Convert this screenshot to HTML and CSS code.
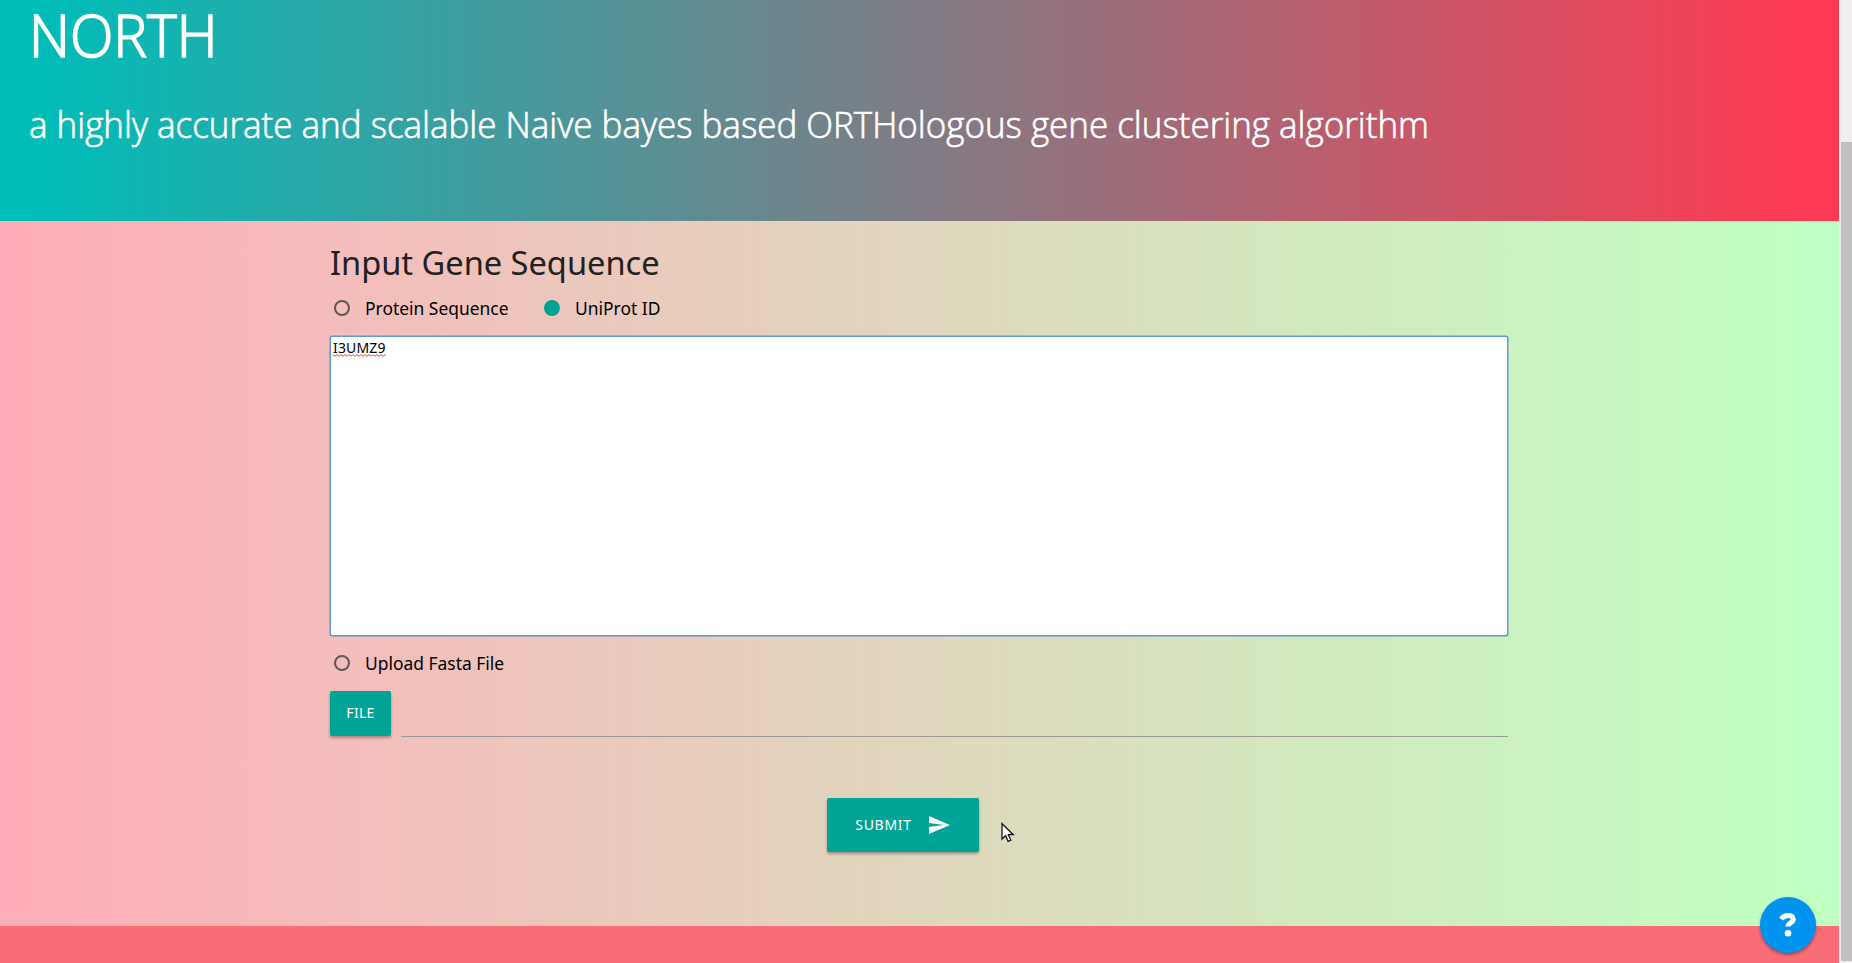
FILE: index.html
```html
<!DOCTYPE html>
<html lang="en">
<head>
<meta charset="utf-8">
<title>NORTH</title>
<link rel="stylesheet" href="styles.css">
</head>
<body>
<div class="window">
  <div class="page">
    <header class="banner">
      <h1 class="brand"><span>NORTH</span></h1>
      <p class="tagline"><span>a highly accurate and scalable Naive bayes based ORTHologous gene clustering algorithm</span></p>
    </header>
    <main class="main">
      <form class="form">
        <h2 class="heading"><span>Input Gene Sequence</span></h2>
        <div class="options">
          <label class="option option-protein"><i class="radio"></i><span>Protein Sequence</span></label>
          <label class="option option-uniprot"><i class="radio radio-on"></i><span>UniProt ID</span></label>
        </div>
        <div class="sequence"><span class="misspelled">I3UMZ9<svg class="squiggle" width="53" height="3" viewBox="0 0 53 3"><defs><pattern id="wave" width="4" height="3" patternUnits="userSpaceOnUse"><path d="M0 .7 L2 2.2 L4 .7" fill="none" stroke="#f0303c" stroke-width=".9"/></pattern></defs><rect width="53" height="3" fill="url(#wave)"/></svg></span></div>
        <label class="option option-upload"><i class="radio"></i><span>Upload Fasta File</span></label>
        <div class="upload">
          <div class="btn btn-file"><span>FILE</span></div>
          <div class="path"></div>
        </div>
        <div class="btn btn-submit"><span>SUBMIT</span><svg width="24" height="24" viewBox="0 0 24 24"><path fill="#fff" d="M2.01 21L23 12 2.01 3 2 10l15 2-15 2z"/></svg></div>
      </form>
    </main>
    <footer class="footer"></footer>
  </div>
  <div class="scrollbar"><div class="thumb"></div></div>
</div>
<div class="help"><svg width="20" height="28" viewBox="0 0 20 28"><path d="M3.2 8.1C5 5.4 7.1 4.4 10 4.4c3.2 0 5.3 1.4 5.3 3.8 0 3.8-5.3 3.3-5.3 7.3" fill="none" stroke="#fff" stroke-width="5"/><circle cx="10" cy="22.3" r="3.3" fill="#fff"/></svg></div>
<svg class="cursor" width="14" height="21" viewBox="0 0 14 21"><path d="M1 1.5V17l3.6-3.3 2.5 5.7 2.7-1.2-2.5-5.5h4.9z" fill="#fff" stroke="#15151f" stroke-width="1.3"/></svg>
</body>
</html>
```
FILE: styles.css
```css
* { box-sizing: border-box; }
body { margin: 0; font-family: "Noto Sans", "Open Sans", sans-serif; color: #000; overflow: hidden; }
.window { display: flex; width: 1852px; height: 963px; position: relative; }
.page { width: 1839px; display: flex; flex-direction: column; }
.banner { height: 221px; padding-left: 29px; color: #fff; background: linear-gradient(90deg, #00bfb9 0, #00bdb8 2%, #ff3a52 98%); font-family: "Open Sans", sans-serif; font-weight: 300; }
.brand, .tagline, .heading { margin: 0; font-weight: inherit; white-space: nowrap; }
.brand span, .tagline span, .heading span, .option span { display: inline-block; transform-origin: 0 50%; }
.brand { height: 85px; line-height: 68px; font-size: 58.5px; -webkit-text-stroke: 1.6px #fff; }
.brand span { transform: scaleX(.97); }
.tagline { line-height: 80px; font-size: 36px; -webkit-text-stroke: .7px #fff; }
.tagline span { transform: scaleX(.9715); }
.main { height: 705px; padding-left: 330px; background: linear-gradient(90deg, #ffadba 0, #ffafba 2%, #c1ffc1 98%); }
.form { width: 1178px; display: flex; flex-direction: column; }
.heading { height: 77px; padding-top: 19px; line-height: 46px; font-size: 33px; font-weight: 400; color: #212121; }
.heading span { transform: scaleX(.987); }
.options { display: flex; height: 38px; }
.option { display: flex; align-items: center; height: 20px; font-size: 18px; white-space: nowrap; padding-left: 4px; }
.option span { transform: scaleX(.968); }
.option-protein { width: 210px; }
.radio { width: 16px; height: 16px; margin-right: 15px; border: 2px solid #5f5855; border-radius: 50%; flex: none; }
.radio-on { background: #00a496; border-color: #00a496; }
.sequence { height: 300px; background: #fff; border: 1px solid #6096dc; box-shadow: 0 0 0 .5px #6096dc; border-radius: 2px; padding: 1px 2px; font-size: 14px; line-height: 20px; }
.misspelled { position: relative; display: inline-block; letter-spacing: .15px; }
.squiggle { position: absolute; left: 0; top: 16px; }
.option-upload { margin-top: 17px; }
.upload { display: flex; gap: 10px; margin-top: 18px; height: 46px; }
.path { flex: 1; border-bottom: 1px solid #9e9999; }
.btn { display: flex; align-items: center; justify-content: center; color: #fff; background: #00a496; border-radius: 2px; box-shadow: 0 2px 3px rgba(0,0,0,.3); font-size: 14px; }
.btn-file { width: 61px; height: 45px; padding-bottom: 2px; letter-spacing: .3px; }
.btn-submit { width: 152px; height: 54px; margin: 61px 0 0 497px; gap: 15px; letter-spacing: .7px; }
.btn-submit span { padding-bottom: 2px; }
.footer { height: 37px; background: #f96d76; }
.scrollbar { width: 13px; background: #eee; padding: 142px 0 2px 2px; }
.thumb { height: 819px; background: #c0c0c0; }
.help { position: absolute; left: 1760px; top: 897px; width: 56px; height: 56px; border-radius: 50%; background: #0093ef; display: flex; align-items: center; justify-content: center; box-shadow: 0 2px 3px rgba(0,0,0,.35); }
.cursor { position: absolute; left: 1001px; top: 822px; }
```
